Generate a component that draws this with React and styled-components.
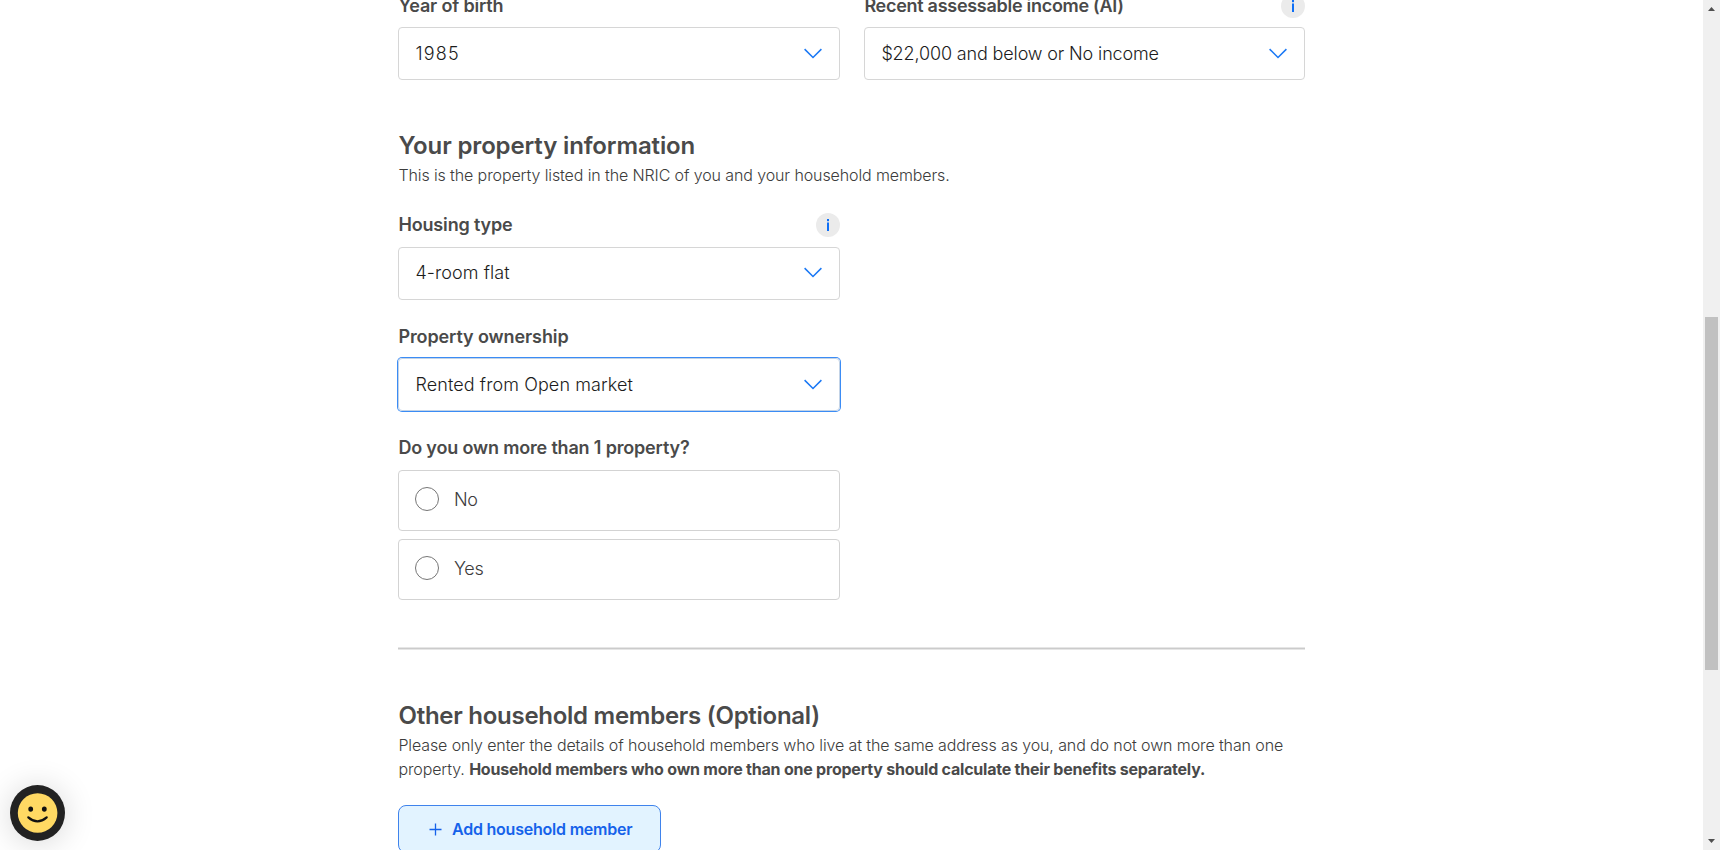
import React from 'react';
import styled, { createGlobalStyle } from 'styled-components';

const GlobalStyle = createGlobalStyle`
  *, *::before, *::after { box-sizing: border-box; }
  body {
    margin: 0;
    background: #fff;
    color: #4a4a4a;
    font-family: Inter, 'Liberation Sans', sans-serif;
    overflow: hidden;
  }
`;

const Viewport = styled.div`
  display: flex;
  width: 100%;
  height: 850px;
  overflow: hidden;
`;

const Main = styled.main`
  flex: 1;
  display: flex;
  flex-direction: column;
  align-items: center;
  overflow: hidden;
`;

const Form = styled.form`
  width: 907px;
  flex: none;
  margin-top: -6px;
`;

const Grid = styled.div`
  display: grid;
  grid-template-columns: 442px 441px;
  column-gap: 24px;
`;

const Column = styled.div`
  width: 442px;
  display: flex;
  flex-direction: column;
  gap: 25px;
`;

const FieldRoot = styled.div`
  display: flex;
  flex-direction: column;
  gap: ${(p) => p.$gap}px;
`;

const LabelRow = styled.div`
  display: flex;
  align-items: center;
  justify-content: space-between;
  height: 24px;
  padding-left: 0.4px;
`;

const Label = styled.label`
  font-size: 18px;
  line-height: 24px;
  font-weight: 600;
  white-space: nowrap;
  letter-spacing: ${(p) => p.$tracking || 0}px;
`;

const InfoButton = styled.button`
  width: 24px;
  height: 24px;
  padding: 0;
  border: 0;
  border-radius: 50%;
  background: #ebebeb;
  display: flex;
`;

const SelectBox = styled.div`
  display: flex;
  align-items: center;
  justify-content: space-between;
  height: 53px;
  padding: 0 17px ${(p) => p.$lift || 0}px 16.4px;
  border: 1px solid ${(p) => (p.$focused ? '#c3d3e6' : '#d6d6d6')};
  border-radius: 4px;
  box-shadow: ${(p) => (p.$focused ? '0 0 0 1px #3b8cf5' : 'none')};
`;

const SelectValue = styled.span`
  font-size: 18px;
  line-height: 24px;
  font-weight: 300;
  color: #1c1c1c;
  white-space: nowrap;
  letter-spacing: ${(p) => p.$tracking || 0}px;
`;

const Heading = styled.h2`
  margin: 0 0 ${(p) => p.$gap}px 0.5px;
  font-size: 24px;
  line-height: 32px;
  font-weight: 600;
  letter-spacing: ${(p) => p.$tracking}px;
`;

const Description = styled.p`
  margin: 0 0 0 0.4px;
  font-size: 16px;
  line-height: 24px;
  font-weight: 300;
  color: #3c3c3c;
  letter-spacing: -0.11px;

  strong {
    font-weight: 700;
    color: #4a4a4a;
    letter-spacing: -0.22px;
  }
`;

const PropertySection = styled.section`
  padding: 50px 0 47px;
`;

const PropertyFields = styled(Column)`
  margin-top: 26px;
`;

const Options = styled.div`
  display: flex;
  flex-direction: column;
  gap: 8px;
`;

const Option = styled.div`
  display: flex;
  align-items: center;
  gap: 15px;
  height: 61px;
  padding: 0 16px 4px;
  border: 1px solid #d3d3d3;
  border-radius: 4px;
`;

const Radio = styled.span`
  width: 24px;
  height: 24px;
  border: 1px solid #767676;
  border-radius: 50%;
`;

const OptionText = styled.span`
  padding-top: 2px;
  font-size: 18px;
  line-height: 24px;
  font-weight: 300;
  color: #3c3c3c;
  letter-spacing: -0.3px;
`;

const Divider = styled.hr`
  height: 3px;
  margin: 0;
  border: solid #e6e6e6;
  border-width: 1px 0;
  background: #cbcbcb;
`;

const MembersSection = styled.section`
  padding-top: 50px;
`;

const AddButton = styled.button`
  display: flex;
  align-items: center;
  gap: 10px;
  width: 263px;
  height: 48px;
  margin-top: 24px;
  padding: 0 0 0 30px;
  border: 1px solid #3f83ec;
  border-radius: 8px;
  background: #e2f3ff;
  color: #1562ea;
  font: 600 16px/24px Inter, 'Liberation Sans', sans-serif;
  letter-spacing: -0.22px;
  white-space: nowrap;
`;

const Scrollbar = styled.div`
  width: 17px;
  flex: none;
  display: flex;
  flex-direction: column;
  align-items: center;
  justify-content: space-between;
  padding: 7px 0;
  background: #f0f0f0;
`;

const ScrollThumb = styled.div`
  width: 13px;
  height: 353px;
  background: #c1c1c1;
`;

const ThumbTrack = styled.div`
  flex: 1;
  padding-top: 306px;
`;

const FeedbackButton = styled.button`
  position: fixed;
  left: 10px;
  top: 785px;
  width: 55px;
  height: 56px;
  padding: 0;
  border: 0;
  border-radius: 50%;
  background: #222;
  box-shadow: 0 2px 32px rgba(0, 0, 0, 0.16);
  display: flex;
`;

const Chevron = () => (
  <svg width="18" height="11" viewBox="0 0 18 11" fill="none" stroke="#1a78f5" strokeWidth="1.5">
    <path d="M0.6 1.1 L9 9.5 L17.4 1.1" />
  </svg>
);

const InfoIcon = () => (
  <svg width="24" height="24" viewBox="0 0 24 24" fill="#0f6ff5">
    <rect x="11" y="6" width="2" height="2.2" />
    <rect x="11" y="9.5" width="2" height="8.5" />
  </svg>
);

const PlusIcon = () => (
  <svg width="13" height="13" viewBox="0 0 13 13" fill="none" stroke="#1562ea" strokeWidth="1.3">
    <path d="M0.5 6.5 H12.5 M6.5 0.5 V12.5" />
  </svg>
);

const Smiley = () => (
  <svg width="55" height="56" viewBox="0 0 55 56">
    <circle cx="27.6" cy="28" r="19.8" fill="#ffd963" />
    <ellipse cx="20.7" cy="24.1" rx="2.4" ry="2.7" fill="#111" />
    <ellipse cx="34.3" cy="24.1" rx="2.4" ry="2.7" fill="#111" />
    <path d="M18.3 32.3 Q27.5 40.3 36.7 32.3" fill="none" stroke="#111" strokeWidth="2.2" strokeLinecap="round" />
  </svg>
);

const Arrow = ({ down }) => (
  <svg width="7" height="4" viewBox="0 0 7 4" fill="#505050">
    <path d={down ? 'M0 0 H7 L3.5 4 Z' : 'M0 4 H7 L3.5 0 Z'} />
  </svg>
);

function Field({ label, labelTracking, value, valueTracking, info, focused, lift, gap = 10 }) {
  return (
    <FieldRoot $gap={gap}>
      <LabelRow>
        <Label $tracking={labelTracking}>{label}</Label>
        {info && (
          <InfoButton type="button" aria-label="More information">
            <InfoIcon />
          </InfoButton>
        )}
      </LabelRow>
      <SelectBox $focused={focused} $lift={lift}>
        <SelectValue $tracking={valueTracking}>{value}</SelectValue>
        <Chevron />
      </SelectBox>
    </FieldRoot>
  );
}

export default function App() {
  return (
    <Viewport>
      <GlobalStyle />
      <Main>
        <Form>
          <Grid>
            <Field label="Year of birth" labelTracking={-0.17} value="1985" valueTracking={1.2} gap={9} />
            <Field
              label="Recent assessable income (AI)"
              labelTracking={-0.28}
              value="$22,000 and below or No income"
              valueTracking={-0.14}
              gap={9}
              info
            />
          </Grid>
          <PropertySection>
            <Heading $tracking={-0.14} $gap={1}>Your property information</Heading>
            <Description>
              This is the property listed in the NRIC of you and your household members.
            </Description>
            <PropertyFields>
              <Field
                label="Housing type"
                labelTracking={-0.15}
                value="4-room flat"
                valueTracking={0.07}
                lift={2}
                info
              />
              <Field
                label="Property ownership"
                labelTracking={-0.1}
                value="Rented from Open market"
                valueTracking={0.1}
                gap={9}
                focused
              />
              <FieldRoot $gap={10}>
                <LabelRow>
                  <Label $tracking={-0.17}>Do you own more than 1 property?</Label>
                </LabelRow>
                <Options>
                  {['No', 'Yes'].map((text) => (
                    <Option key={text}>
                      <Radio />
                      <OptionText>{text}</OptionText>
                    </Option>
                  ))}
                </Options>
              </FieldRoot>
            </PropertyFields>
          </PropertySection>
          <Divider />
          <MembersSection>
            <Heading $tracking={-0.27} $gap={1}>Other household members (Optional)</Heading>
            <Description>
              Please only enter the details of household members who live at the same address as you, and do not own more than one
              property. <strong>Household members who own more than one property should calculate their benefits separately.</strong>
            </Description>
            <AddButton type="button">
              <PlusIcon />
              Add household member
            </AddButton>
          </MembersSection>
        </Form>
      </Main>
      <Scrollbar>
        <Arrow />
        <ThumbTrack>
          <ScrollThumb />
        </ThumbTrack>
        <Arrow down />
      </Scrollbar>
      <FeedbackButton type="button" aria-label="Feedback">
        <Smiley />
      </FeedbackButton>
    </Viewport>
  );
}
